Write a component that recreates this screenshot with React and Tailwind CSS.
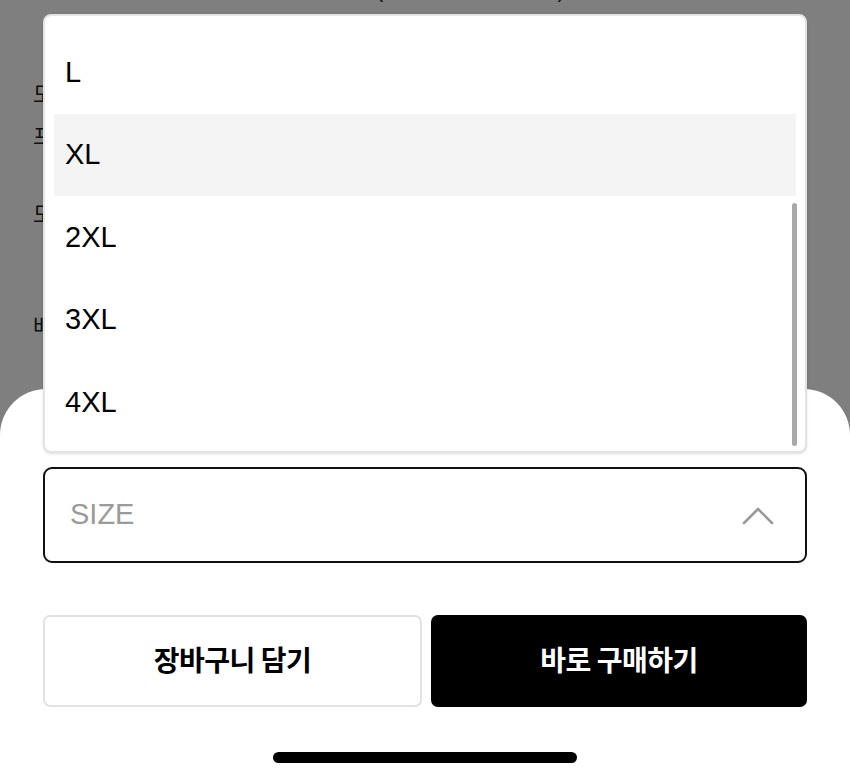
import { useState } from 'react'

const SIZES = ['L', 'XL', '2XL', '3XL', '4XL']

const FONT = { fontFamily: '"Liberation Sans", "Noto Sans CJK KR", sans-serif' }
const KR = { fontFamily: '"Noto Sans CJK KR", sans-serif' }

export default function App() {
  const [hover] = useState('XL')

  return (
    <div className="relative w-[850px] h-[779px] overflow-hidden bg-white" style={FONT}>
      {/* page behind the sheet, mostly hidden by the option list */}
      <div className="flex flex-col px-[33px] text-[22px] text-[#222]">
        <p className="-mt-[27px] h-[30px] pl-[110px] whitespace-nowrap">
          무신사 스탠다드 <span className="text-[#2b3a9a]">/</span> 베이직 (오버핏 반팔 티셔츠)
        </p>
        <p className="mt-[71px] leading-[42px] w-[10px] overflow-hidden whitespace-nowrap">모델</p>
        <p className="leading-[42px] w-[10px] overflow-hidden whitespace-nowrap">프린트</p>
        <p className="mt-[36px] leading-[42px] w-[10px] overflow-hidden whitespace-nowrap">모든</p>
        <p className="mt-[70px] leading-[42px] w-[10px] overflow-hidden whitespace-nowrap">배송</p>
      </div>

      {/* dim */}
      <div className="absolute inset-0 bg-black/50" />

      {/* bottom sheet */}
      <div className="absolute inset-x-0 top-[389px] bottom-0 bg-white rounded-t-[46px] flex flex-col px-[43px] pt-[78px]">
        <div className="relative">
          {/* open option list */}
          <div className="absolute left-0 right-0 bottom-[calc(100%+14px)] h-[439px] bg-white border-2 border-[#e3e3e3] rounded-[8px] shadow-sm overflow-hidden">
            <ul className="flex flex-col px-[9px] pt-[15px]">
              {SIZES.map((s) => (
                <li
                  key={s}
                  className={`h-[82.5px] flex items-center pl-[11px] text-[29px] text-black ${s === hover ? 'bg-[#f4f4f4]' : ''}`}
                >
                  {s}
                </li>
              ))}
            </ul>
            <div className="absolute right-[8px] top-[187px] w-[5px] h-[243px] rounded-full bg-[#a9a9a9]" />
          </div>

          <button className="w-full h-[96px] border-2 border-[#111] rounded-[9px] flex items-center justify-between pl-[25px] pr-[31px] bg-white">
            <span className="text-[29px] text-[#9a9a9a]">SIZE</span>
            <svg width="32" height="20" viewBox="0 0 32 20" fill="none">
              <path d="M2 18 L16 4 L30 18" stroke="#9a9a9a" strokeWidth="2.6" strokeLinecap="round" strokeLinejoin="round" />
            </svg>
          </button>
        </div>

        <div className="mt-[52px] flex gap-[9px]">
          <button className="w-[379px] h-[92px] border-2 border-[#e2e2e2] rounded-[7px] bg-white flex items-center justify-center pb-[4px] text-[28px] font-bold text-black tracking-[-0.5px]" style={KR}>
            장바구니 담기
          </button>
          <button className="flex-1 h-[92px] rounded-[7px] bg-black flex items-center justify-center pb-[4px] text-[28px] font-bold text-white tracking-[-0.5px]" style={KR}>
            바로 구매하기
          </button>
        </div>

        <div className="mt-[45px] flex justify-center">
          <div className="w-[304px] h-[11px] rounded-full bg-black" />
        </div>
      </div>
    </div>
  )
}
